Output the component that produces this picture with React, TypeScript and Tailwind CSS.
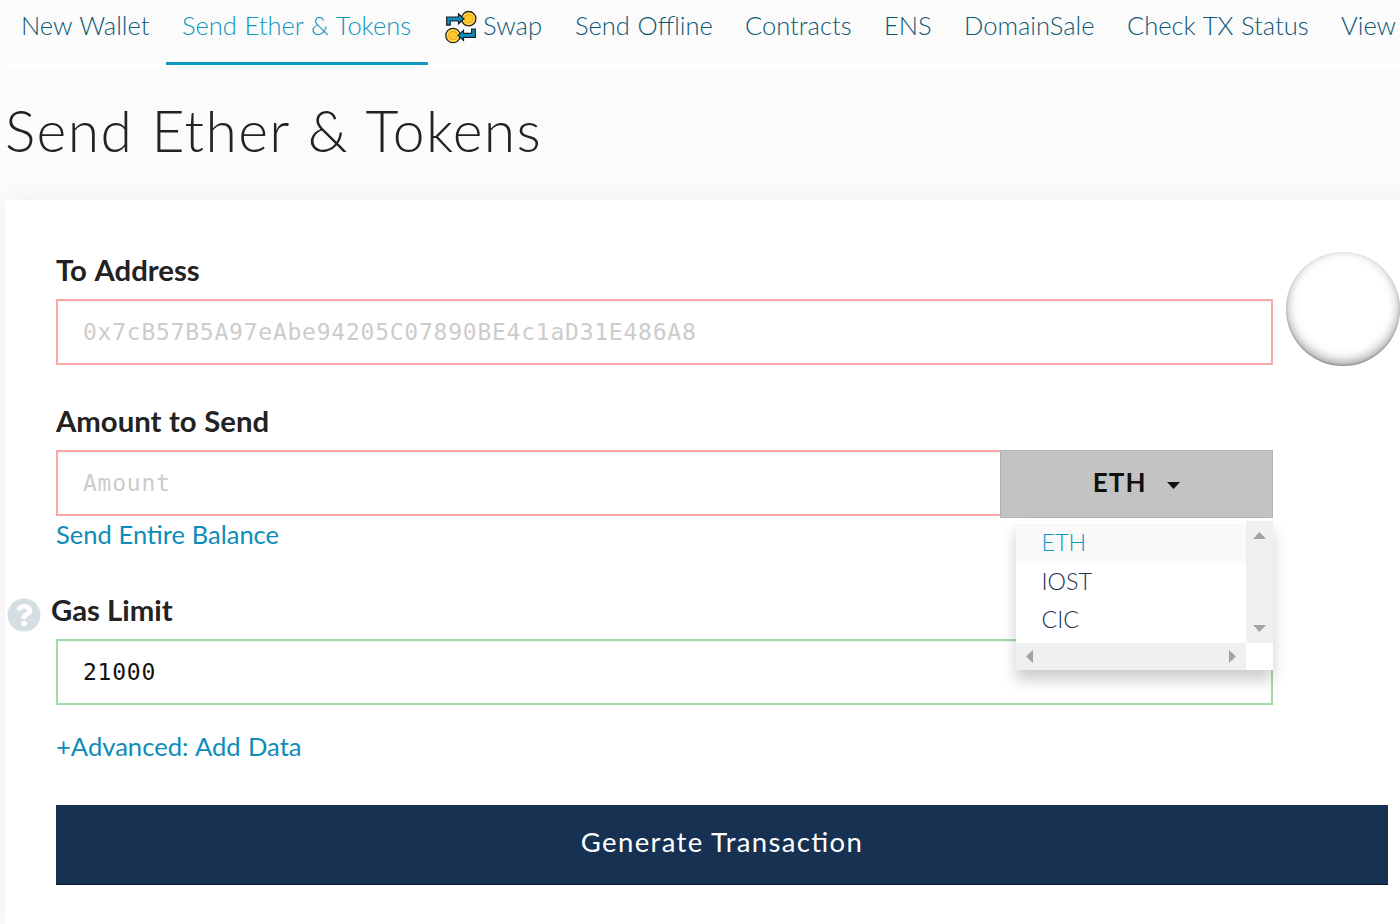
import React, { useState } from 'react';
import { FaQuestionCircle } from 'react-icons/fa';

const tabs = [
  { label: 'New Wallet', width: 'w-[161px]' },
  { label: 'Send Ether & Tokens', width: 'w-[262px]' },
  { label: 'Swap', width: 'w-[131px]' },
  { label: 'Send Offline', width: 'w-[170px]' },
  { label: 'Contracts', width: 'w-[139px]' },
  { label: 'ENS', width: 'w-[80px]' },
  { label: 'DomainSale', width: 'w-[163px]' },
  { label: 'Check TX Status', width: 'w-[214px]' },
  { label: 'View', width: 'w-[75px]' },
];

const tokens = ['ETH', 'IOST', 'CIC'];

const Coin: React.FC<{ cx: number; cy: number }> = ({ cx, cy }) => (
  <g>
    <circle cx={cx} cy={cy} r="7.2" fill="#ffdf45" stroke="#222" strokeWidth="1.3" />
    <circle cx={cx} cy={cy} r="4.2" fill="#ffcb2e" stroke="#f9a021" strokeWidth="1.2" />
  </g>
);

const SwapIcon = () => (
  <svg width="32" height="34" viewBox="0 0 32 34" className="shrink-0">
    <Coin cx={23.7} cy={8.7} />
    <Coin cx={8} cy={25.5} />
    <path
      d="M1.7 15.2V7h11.8V3.8l5.4 5-5.4 5V11H5.2v4.2z"
      fill="#0e8fbe"
      stroke="#16202b"
      strokeWidth="1.2"
    />
    <path
      d="M30.3 19v8.4H18.5v3l-5.4-5 5.4-5v3h8.1V19z"
      fill="#0e8fbe"
      stroke="#16202b"
      strokeWidth="1.2"
    />
  </svg>
);

interface FieldProps {
  value: string;
  placeholder?: string;
  className: string;
  onChange: (val: string) => void;
}

const Field: React.FC<FieldProps> = ({ value, placeholder, className, onChange }) => (
  <input
    type="text"
    value={value}
    placeholder={placeholder}
    onChange={(e) => onChange(e.target.value)}
    className={`h-[66px] border-2 bg-white px-[25px] font-['DejaVu_Sans_Mono',monospace] text-[23px] tracking-[0.76px] text-[#111] shadow-[inset_0_1px_1px_rgba(0,0,0,0.06)] outline-none placeholder:text-[#ccc] ${className}`}
  />
);

const TokenMenu: React.FC<{ selected: string; onSelect: (t: string) => void }> = ({ selected, onSelect }) => (
  <div className="absolute top-[71px] right-0 z-10 grid h-[149px] w-[257px] grid-cols-[230px_27px] grid-rows-[122px_27px] shadow-[0_10px_14px_rgba(0,0,0,0.2)]">
    <ul className="bg-white pt-[3px] text-[23.3px] font-light">
      {tokens.map((t) => (
        <li
          key={t}
          onClick={() => onSelect(t)}
          className={`h-[38.5px] cursor-pointer pl-[26px] leading-[36px] ${t === selected ? 'bg-[#fafafa] text-[#0e97c0]' : 'text-[#163151]'}`}
        >
          {t}
        </li>
      ))}
    </ul>
    <div className="flex flex-col items-center justify-between bg-[#f0f0f0] pt-[11px] pb-[11px]">
      <svg width="13" height="7" viewBox="0 0 13 7"><path d="M0 7L6.5 0 13 7z" fill="#a3a3a3" /></svg>
      <svg width="13" height="7" viewBox="0 0 13 7"><path d="M0 0L6.5 7 13 0z" fill="#a3a3a3" /></svg>
    </div>
    <div className="flex items-center justify-between bg-[#f0f0f0] px-[10px]">
      <svg width="7" height="13" viewBox="0 0 7 13"><path d="M7 0L0 6.5 7 13z" fill="#a3a3a3" /></svg>
      <svg width="7" height="13" viewBox="0 0 7 13"><path d="M0 0L7 6.5 0 13z" fill="#a3a3a3" /></svg>
    </div>
    <div className="bg-white" />
  </div>
);

const App = () => {
  const [activeTab, setActiveTab] = useState('Send Ether & Tokens');
  const [address, setAddress] = useState('');
  const [amount, setAmount] = useState('');
  const [gasLimit, setGasLimit] = useState('21000');
  const [token, setToken] = useState('ETH');

  return (
    <div className="h-[924px] w-full overflow-hidden bg-[#fbfbfb] pl-[5px] font-['Lato',sans-serif] text-[#222]">
      <nav className="flex h-[67px] border-b-[3px] border-white">
        {tabs.map(({ label, width }) => (
          <button
            key={label}
            onClick={() => setActiveTab(label)}
            className={`flex h-[65px] shrink-0 items-start pt-[9px] pl-4 text-[25.5px] leading-[33px] font-light whitespace-nowrap [word-spacing:0.8px] ${width} ${
              label === activeTab ? 'border-b-[3px] border-[#0e97c0] text-[#0e97c0]' : 'text-[#0b5875]'
            }`}
          >
            {label === 'Swap' && <span className="mt-px mr-1.5 ml-px"><SwapIcon /></span>}
            {label}
          </button>
        ))}
      </nav>

      <h1 className="h-[133px] pt-[28px] text-[57px] leading-[70px] font-light tracking-[1.4px] whitespace-nowrap [word-spacing:1.3px]">
        Send Ether &amp; Tokens
      </h1>

      <main className="h-[724px] w-[1420px] bg-white pl-[51px] shadow-[0_0_24px_rgba(0,0,0,0.05)]">
        <section className="flex pt-[51px]">
          <div className="w-[1217px]">
            <label className="block h-[48px] text-[29.3px] leading-[38px] font-bold [word-spacing:1.5px]">To Address</label>
            <Field
              value={address}
              onChange={setAddress}
              placeholder="0x7cB57B5A97eAbe94205C07890BE4c1aD31E486A8"
              className="w-full border-[#f9aaa8]"
            />
          </div>
          <div className="mt-px ml-[13px] size-[114px] shrink-0 rounded-full bg-white shadow-[inset_0_-4px_12px_rgba(0,0,0,0.4),inset_0_-1px_2px_rgba(0,0,0,0.25)]" />
        </section>

        <section className="mt-[36px]">
          <label className="block h-[48px] text-[29.3px] leading-[38px] font-bold [word-spacing:0.5px]">Amount to Send</label>
          <div className="relative flex h-[68px] w-[1216.5px]">
            <Field
              value={amount}
              onChange={setAmount}
              placeholder="Amount"
              className="w-[944px] border-r-0 border-[#f9aaa8]"
            />
            <button className="flex h-[68px] w-[272.5px] items-center justify-center border border-[#b3b3b3] bg-[#c3c3c3] pb-1 text-[26px] font-bold tracking-[1.1px] text-[#111]">
              {token}
              <svg width="13" height="7" viewBox="0 0 13 7" className="mt-1.5 ml-5">
                <path d="M0 0h13L6.5 7z" fill="#111" />
              </svg>
            </button>
            <TokenMenu selected={token} onSelect={setToken} />
          </div>
          <a className="block text-[25.5px] leading-[33px] text-[#0e8cb8] [word-spacing:0.3px]">Send Entire Balance</a>
        </section>

        <section className="mt-[40px]">
          <div className="-ml-[49px] flex h-[48px]">
            <FaQuestionCircle className="mt-[7px] mr-2.5 size-[34px] text-[#d5dee0]" />
            <label className="text-[29.3px] leading-[38px] font-bold">Gas Limit</label>
          </div>
          <Field value={gasLimit} onChange={setGasLimit} className="block w-[1217px] border-[#a5dca4]" />
        </section>

        <a className="mt-[25px] block text-[25.6px] leading-[33px] text-[#0e8cb8] [word-spacing:0.8px]">+Advanced: Add Data</a>

        <button className="mt-[42px] block h-[80px] w-[1332px] border-b border-[#07182f] bg-[#163151] pb-[5px] text-[27.5px] tracking-[1.35px] text-white [font-feature-settings:'liga']">
          Generate Transaction
        </button>
      </main>
    </div>
  );
};

export default App;
